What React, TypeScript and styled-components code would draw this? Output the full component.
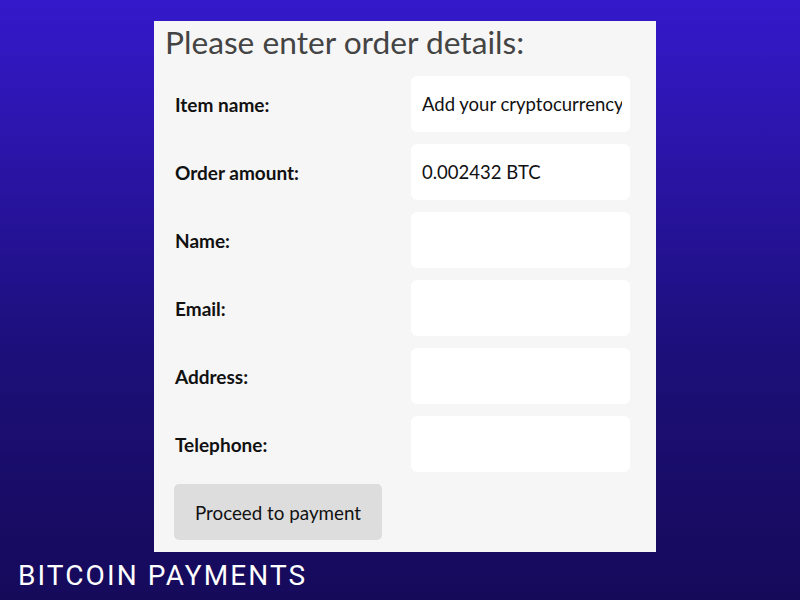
import React from "react";
import styled, { createGlobalStyle } from "styled-components";

const Global = createGlobalStyle`
  html, body { margin: 0; padding: 0; }
  body {
    width: 800px;
    height: 600px;
    overflow: hidden;
    background: linear-gradient(180deg, #3419cb 0%, #1c0f78 60%, #150a5a 100%);
  }
`;

const Page = styled.div`
  width: 800px;
  height: 600px;
  display: flex;
  flex-direction: column;
  padding-top: 21px;
  box-sizing: border-box;
`;

const Panel = styled.div`
  margin-left: 154px;
  width: 502px;
  height: 531px;
  box-sizing: border-box;
  background: #f6f6f6;
  padding: 0 26px 0 20px;
  font-family: Lato, "Noto Sans", sans-serif;
`;

const Heading = styled.h1`
  margin: 0 0 0 -9px;
  font-size: 31.7px;
  font-weight: 400;
  line-height: 43px;
  color: #444444;
  height: 55px;
  white-space: nowrap;
`;

const Form = styled.div`
  display: grid;
  grid-template-columns: 237px 219px;
  grid-auto-rows: 56px;
  row-gap: 12px;
`;

const Label = styled.div`
  display: flex;
  align-items: center;
  padding-left: 1px;
  font-size: 19px;
  font-weight: 700;
  color: #111;
`;

const Field = styled.div`
  background: #fff;
  border-radius: 6px;
  display: flex;
  align-items: center;
  padding: 0 0 0 11px;
  overflow: hidden;
  white-space: nowrap;
  font-size: 18.5px;
  color: #111;
`;

const FieldText = styled.span`
  display: block;
  width: 200px;
  overflow: hidden;
`;

const Button = styled.button`
  margin-top: 12px;
  width: 208px;
  height: 56px;
  border: none;
  border-radius: 5px;
  background: #dddddd;
  font-family: Lato, "Noto Sans", sans-serif;
  font-size: 18.8px;
  color: #111;
  padding: 0;
`;

const Caption = styled.div`
  margin-top: 6px;
  margin-left: 18px;
  font-family: Roboto, "Noto Sans", sans-serif;
  font-size: 28px;
  letter-spacing: 2.1px;
  color: #ffffff;
  line-height: 36px;
`;

const rows: [string, string][] = [
  ["Item name:", "Add your cryptocurrency"],
  ["Order amount:", "0.002432 BTC"],
  ["Name:", ""],
  ["Email:", ""],
  ["Address:", ""],
  ["Telephone:", ""],
];

export default function App() {
  return (
    <>
      <Global />
      <Page>
        <Panel>
          <Heading>Please enter order details:</Heading>
          <Form>
            {rows.map(([l, v]) => (
              <React.Fragment key={l}>
                <Label>{l}</Label>
                <Field>
                  <FieldText>{v}</FieldText>
                </Field>
              </React.Fragment>
            ))}
          </Form>
          <Button>Proceed to payment</Button>
        </Panel>
        <Caption>BITCOIN PAYMENTS</Caption>
      </Page>
    </>
  );
}
